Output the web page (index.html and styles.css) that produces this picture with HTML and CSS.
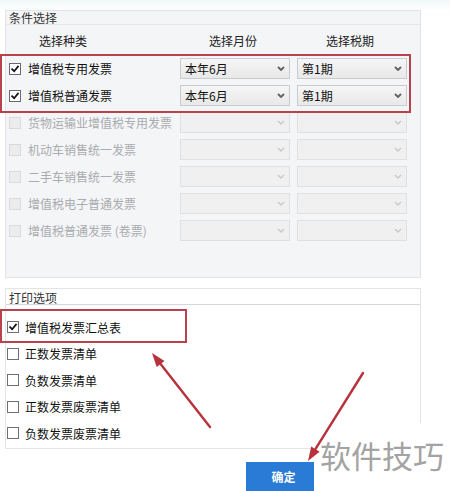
FILE: index.html
```html
<!DOCTYPE html>
<html lang="zh-CN">
<head>
<meta charset="utf-8">
<title>打印</title>
<link rel="stylesheet" href="styles.css">
</head>
<body>
<div class="page">
  <section class="group cond">
    <div class="group-title">条件选择</div>
    <div class="grid head">
      <div class="h-kind">选择种类</div>
      <div class="h-col">选择月份</div>
      <div class="h-col">选择税期</div>
    </div>

    <div class="grid row">
      <label class="lbl"><span class="cb checked"><svg viewBox="0 0 12 12"><path d="M2.5 6.2 L5 8.6 L9.6 3"/></svg></span>增值税专用发票</label>
      <div class="sel"><span>本年6月</span><svg class="chev" viewBox="0 0 8 5"><path d="M1 1 L4 4 L7 1"/></svg></div>
      <div class="sel"><span>第1期</span><svg class="chev" viewBox="0 0 8 5"><path d="M1 1 L4 4 L7 1"/></svg></div>
    </div>
    <div class="grid row">
      <label class="lbl"><span class="cb checked"><svg viewBox="0 0 12 12"><path d="M2.5 6.2 L5 8.6 L9.6 3"/></svg></span>增值税普通发票</label>
      <div class="sel"><span>本年6月</span><svg class="chev" viewBox="0 0 8 5"><path d="M1 1 L4 4 L7 1"/></svg></div>
      <div class="sel"><span>第1期</span><svg class="chev" viewBox="0 0 8 5"><path d="M1 1 L4 4 L7 1"/></svg></div>
    </div>
    <div class="grid row off">
      <label class="lbl"><span class="cb"></span>货物运输业增值税专用发票</label>
      <div class="sel"><span></span><svg class="chev" viewBox="0 0 8 5"><path d="M1 1 L4 4 L7 1"/></svg></div>
      <div class="sel"><span></span><svg class="chev" viewBox="0 0 8 5"><path d="M1 1 L4 4 L7 1"/></svg></div>
    </div>
    <div class="grid row off">
      <label class="lbl"><span class="cb"></span>机动车销售统一发票</label>
      <div class="sel"><span></span><svg class="chev" viewBox="0 0 8 5"><path d="M1 1 L4 4 L7 1"/></svg></div>
      <div class="sel"><span></span><svg class="chev" viewBox="0 0 8 5"><path d="M1 1 L4 4 L7 1"/></svg></div>
    </div>
    <div class="grid row off">
      <label class="lbl"><span class="cb"></span>二手车销售统一发票</label>
      <div class="sel"><span></span><svg class="chev" viewBox="0 0 8 5"><path d="M1 1 L4 4 L7 1"/></svg></div>
      <div class="sel"><span></span><svg class="chev" viewBox="0 0 8 5"><path d="M1 1 L4 4 L7 1"/></svg></div>
    </div>
    <div class="grid row off">
      <label class="lbl"><span class="cb"></span>增值税电子普通发票</label>
      <div class="sel"><span></span><svg class="chev" viewBox="0 0 8 5"><path d="M1 1 L4 4 L7 1"/></svg></div>
      <div class="sel"><span></span><svg class="chev" viewBox="0 0 8 5"><path d="M1 1 L4 4 L7 1"/></svg></div>
    </div>
    <div class="grid row off">
      <label class="lbl"><span class="cb"></span>增值税普通发票 (卷票)</label>
      <div class="sel"><span></span><svg class="chev" viewBox="0 0 8 5"><path d="M1 1 L4 4 L7 1"/></svg></div>
      <div class="sel"><span></span><svg class="chev" viewBox="0 0 8 5"><path d="M1 1 L4 4 L7 1"/></svg></div>
    </div>
  </section>

  <section class="group print">
    <div class="group-title">打印选项</div>
    <ul class="opts">
      <li><span class="cb checked"><svg viewBox="0 0 12 12"><path d="M2.5 6.2 L5 8.6 L9.6 3"/></svg></span>增值税发票汇总表</li>
      <li><span class="cb"></span>正数发票清单</li>
      <li><span class="cb"></span>负数发票清单</li>
      <li><span class="cb"></span>正数发票废票清单</li>
      <li><span class="cb"></span>负数发票废票清单</li>
    </ul>
  </section>

  <div class="actions"><button class="ok" type="button">确定</button></div>

  <div class="mark mark-a"></div>
  <div class="mark mark-b"></div>
  <div class="watermark">软件技巧</div>
  <svg class="arrows" viewBox="0 0 450 491">
    <line x1="210" y1="427" x2="160.6" y2="364"/>
    <polygon points="152,353 164.5,360.9 156.7,367.1"/>
    <line x1="363" y1="373" x2="315.4" y2="449.1"/>
    <polygon points="308,461 319.6,451.8 311.2,446.5"/>
  </svg>
</div>
</body>
</html>
```

FILE: styles.css
```css
* { box-sizing: border-box; }
html, body { margin: 0; padding: 0; }
body {
  width: 450px;
  height: 491px;
  overflow: hidden;
  background: linear-gradient(#f2f9f9 0, #fbfefe 9px, #ffffff 10px);
  font-family: "Noto Sans CJK SC", "Noto Sans", sans-serif;
  font-size: 12px;
  color: #111;
}
.page {
  position: relative;
  width: 450px;
  height: 491px;
  padding-top: 10px;
}
.group {
  margin-left: 5px;
  width: 416px;
  border: 1px solid #e1e3e7;
}
.cond {
  background: #f4f5f7;
  padding-bottom: 33px;
}
.group-title {
  line-height: 12px;
  padding: 1px 4px 0 3px;
  border-bottom: 1px solid #e4e6ea;
  color: #333;
}
.grid {
  display: grid;
  grid-template-columns: 167px 110px 110px;
  column-gap: 7px;
  align-items: center;
}
.head { height: 30px; color: #222; }
.h-kind { padding-left: 33px; }
.h-col { text-align: center; padding-right: 4px; }
.row { height: 27px; }
.lbl {
  display: flex;
  align-items: center;
  gap: 7px;
  padding-left: 3px;
  white-space: nowrap;
}
.cb {
  flex: none;
  width: 12px;
  height: 12px;
  border: 1px solid #6a6a6a;
  background: #fff;
  display: inline-flex;
}
.cb svg { width: 10px; height: 10px; }
.cb path { fill: none; stroke: #111; stroke-width: 2; stroke-linecap: square; }
.sel {
  height: 21px;
  border: 1px solid #c9cbce;
  background: linear-gradient(#f6f6f6, #e8e8e8);
  display: flex;
  align-items: center;
  justify-content: space-between;
  padding: 0 4px 0 4px;
  color: #111;
}
.chev { width: 8px; height: 5px; }
.chev path { fill: none; stroke: #5d6166; stroke-width: 1.8; }
.off .lbl { color: #a9abae; }
.off .cb { border-color: #d9dadc; background: #ececec; }
.off .sel { border-color: #dfe0e2; background: #f0f0f1; }
.off .chev path { stroke: #c6c8cb; stroke-width: 1.4; }

.print {
  margin-top: 10px;
  background: #fff;
  border-color: #e4e4e4;
}
.print .group-title {
  padding-top: 3px;
  border-bottom-color: #d8d8d8;
}
.opts {
  list-style: none;
  margin: 0;
  padding: 9px 0 1px 1px;
}
.opts li {
  height: 26.5px;
  display: flex;
  align-items: center;
  gap: 6px;
}
.opts .cb { border-color: #707070; }

.actions { margin-top: 13px; padding-left: 246px; }
.ok {
  width: 75px;
  height: 30px;
  border: 0;
  margin: 0;
  background: #2a7bd6;
  color: #fff;
  font-family: inherit;
  font-size: 12px;
  font-weight: bold;
  padding: 0;
}

.mark {
  position: absolute;
  border: 2px solid #b8434d;
}
.mark-a { left: 0; top: 54px; width: 411px; height: 59px; }
.mark-b { left: 0; top: 309px; width: 187px; height: 34px; }

.watermark {
  position: absolute;
  left: 314px;
  top: 423px;
  width: 136px;
  height: 68px;
  background: #fff;
  color: #a3a3a3;
  font-size: 31px;
  line-height: 36px;
  padding: 14px 0 0 6px;
  white-space: nowrap;
}
.arrows {
  position: absolute;
  left: 0;
  top: 0;
  width: 450px;
  height: 491px;
  pointer-events: none;
}
.arrows line { stroke: #b8323d; stroke-width: 2.4; stroke-linecap: round; }
.arrows polygon { fill: #b8323d; }
```
